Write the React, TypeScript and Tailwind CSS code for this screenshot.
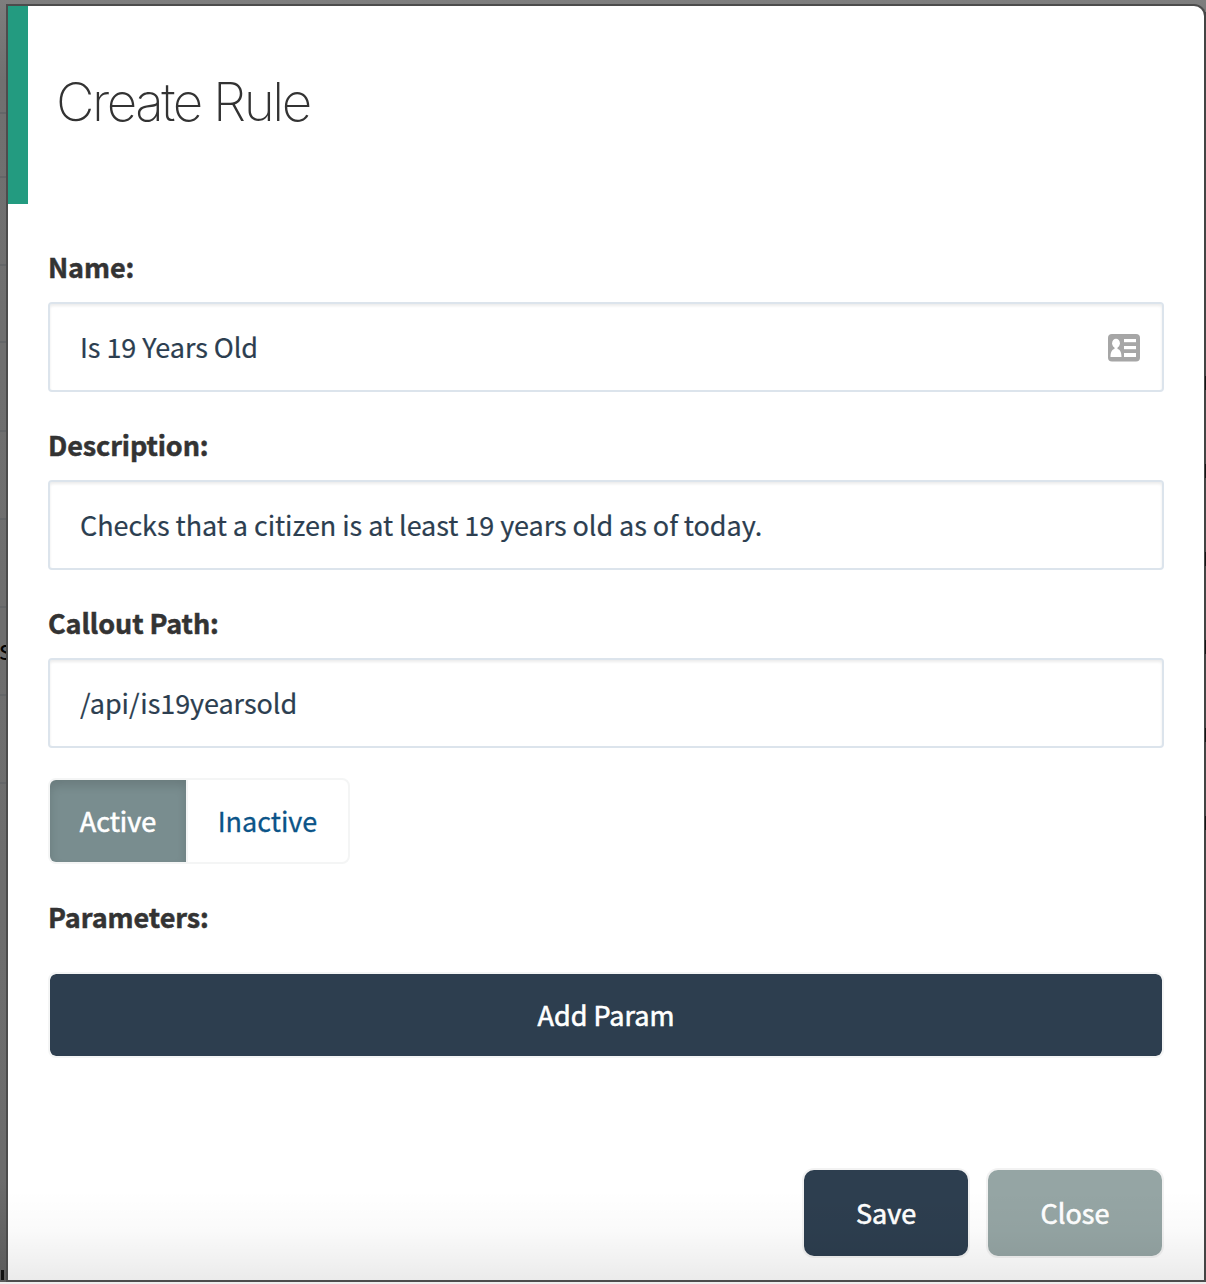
import React, { useState } from "react";

const rowLines = ["h-[114px]", "h-[64px]", "h-[88px]", "h-[77px]", "h-[89px]", "h-[88px]", "h-[88px]", "h-[88px]", "h-[88px]"];

function Field({ label, value, icon }: { label: string; value: string; icon?: React.ReactNode }) {
  const [text, setText] = useState(value);
  return (
    <div className="mb-8">
      <label className="mb-[13px] block h-11 whitespace-nowrap text-[27px] font-bold leading-[44px] tracking-[-0.1px] text-[#333] [-webkit-text-stroke:0.5px_#333]">{label}</label>
      <div className="flex h-[90px] items-center rounded-[4px] border-2 border-[#dce4ec] bg-white pl-[30px] pr-[22px] shadow-[inset_0_2px_3px_rgba(0,0,0,0.08)]">
        <input
          className="mb-[2px] h-[60px] min-w-0 flex-1 bg-transparent text-[27px] tracking-[-0.06px] text-[#2c3e50] outline-none [-webkit-text-stroke:0.2px_#2c3e50]"
          value={text}
          onChange={(e) => setText(e.target.value)}
        />
        {icon}
      </div>
    </div>
  );
}

function ContactCardIcon() {
  return (
    <svg width="32" height="28" viewBox="0 0 32 28" className="mt-[2px] shrink-0">
      <rect width="32" height="27.500" rx="4" fill="#a6a6a6" />
      <g fill="#fff">
        <ellipse cx="8" cy="9.300" rx="3.900" ry="4.600" />
        <path d="M6.500 12.500h3v2.500c2.600.7 4 3 4 8h-11c0-5 1.400-7.300 4-8z" />
        <rect x="16" y="5" width="12" height="3.200" />
        <rect x="16" y="12" width="12" height="3.200" />
        <rect x="16" y="19" width="12" height="4" />
      </g>
    </svg>
  );
}

export default function App() {
  return (
    <div className="relative flex h-[1284px] w-[1206px] flex-col overflow-hidden bg-[#eeecec] font-['Noto_Sans_CJK_SC',sans-serif]">
      <div className="relative h-[1282px] bg-[linear-gradient(#7e7e7e,#707070_80px,#6c6c6c_1180px,#5b5b5b)] pl-[8px] pr-[2px] pt-[6px]">
        <div className="absolute left-0 top-0 w-2">
          {rowLines.map((h, i) => (
            <div key={i} className={`${h} border-b-2 border-[#646668]`} />
          ))}
        </div>
        <span className="absolute left-[-1px] top-[631px] text-[27px] leading-[36px] text-black">s</span>
        <span className="absolute left-[1px] top-[1270px] h-[10px] w-[3px] bg-[#111]" />
        <div className="relative flex h-[1274px] w-[1196px] flex-col rounded-tr-[10px] bg-white shadow-[0_0_0_2px_#4c4c4c]">
          <header className="h-[198px] shrink-0 border-l-[20px] border-[#239b80] pl-[28px] pt-[62px]">
            <h1 className="whitespace-nowrap font-['Inter'] text-[53px] font-[200] leading-[68px] tracking-[-2.500px] text-[#333]">Create Rule</h1>
          </header>
          <main className="px-10 pt-[41px]">
            <Field label="Name:" value="Is 19 Years Old" icon={<ContactCardIcon />} />
            <div className="mt-[-1px]">
              <Field label="Description:" value="Checks that a citizen is at least 19 years old as of today." />
            </div>
            <div className="mt-[-1px]">
              <Field label="Callout Path:" value="/api/is19yearsold" />
            </div>
            <div className="mt-[-2px] flex h-[86px] w-[302px] rounded-[8px] border-2 border-[#f4f5f5] text-[27px]">
              <button className="w-[136px] rounded-l-[6px] bg-[#798d8f] text-white shadow-[inset_0_6px_10px_rgba(0,0,0,0.12)] [-webkit-text-stroke:0.6px_white]">Active</button>
              <button className="flex-1 border-l-2 border-[#f4f5f5] pr-px text-[#0b5488] [-webkit-text-stroke:0.3px_#0b5488]">Inactive</button>
            </div>
            <div className="mt-[31px] h-11 text-[27px] font-bold leading-[44px] tracking-[-0.05px] text-[#333] [-webkit-text-stroke:0.5px_#333]">Parameters:</div>
            <button className="mt-[33px] block h-[86px] w-full rounded-[8px] border-2 border-[#f4f5f5] bg-[#2d3e4f] bg-clip-padding text-[27px] text-white [-webkit-text-stroke:0.6px_white]">Add Param</button>
          </main>
          <footer className="mt-auto flex h-[112px] shrink-0 justify-end gap-4 pr-10 text-[27px] text-white [-webkit-text-stroke:0.6px_white]">
            <button className="h-[90px] w-[168px] rounded-[12px] border-2 border-black/5 bg-[#2d3e4f] bg-clip-padding">Save</button>
            <button className="h-[90px] w-[178px] rounded-[12px] border-2 border-black/5 bg-[#95a5a4] bg-clip-padding">Close</button>
          </footer>
          <div className="pointer-events-none absolute inset-x-0 bottom-0 h-[90px] bg-[linear-gradient(transparent,rgba(0,0,0,0.02)_45%,rgba(0,0,0,0.08))]" />
        </div>
        <div className="absolute right-0 top-[12px] h-[1268px] w-[2px] bg-[#444]">
          <div className="flex flex-col items-end gap-[74px] pt-[364px]">
            {[0, 1, 2, 3, 4, 5].map((i) => (
              <span key={i} className="h-[14px] w-px bg-[#151515]" />
            ))}
          </div>
        </div>
      </div>
    </div>
  );
}
